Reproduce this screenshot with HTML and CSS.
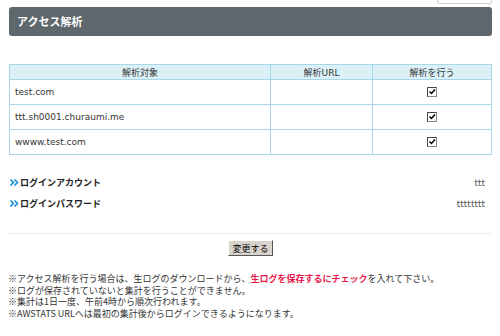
FILE: index.html
```html
<!DOCTYPE html>
<html lang="ja">
<head>
    <meta charset="UTF-8">
    <title>アクセス解析</title>
    <link rel="stylesheet" href="styles.css">
</head>
<body>
    <div class="page">
        <div class="tabline"><div class="tab"></div></div>
        <h1 class="title">アクセス解析</h1>

        <table class="list">
            <tr>
                <th class="c1">解析対象</th>
                <th class="c2">解析URL</th>
                <th class="c3">解析を行う</th>
            </tr>
            <tr>
                <td>test.com</td>
                <td></td>
                <td class="center"><svg class="check" width="10" height="10" viewBox="0 0 10 10"><rect x="0.5" y="0.5" width="9" height="9" fill="#fff" stroke="#888"/><path d="M0.5 9.5V0.5H9.5" fill="none" stroke="#444"/><path d="M2.5 4.5l2 2 3.5-4" fill="none" stroke="#000" stroke-width="1.5"/></svg></td>
            </tr>
            <tr>
                <td>ttt.sh0001.churaumi.me</td>
                <td></td>
                <td class="center"><svg class="check" width="10" height="10" viewBox="0 0 10 10"><rect x="0.5" y="0.5" width="9" height="9" fill="#fff" stroke="#888"/><path d="M0.5 9.5V0.5H9.5" fill="none" stroke="#444"/><path d="M2.5 4.5l2 2 3.5-4" fill="none" stroke="#000" stroke-width="1.5"/></svg></td>
            </tr>
            <tr>
                <td>wwww.test.com</td>
                <td></td>
                <td class="center"><svg class="check" width="10" height="10" viewBox="0 0 10 10"><rect x="0.5" y="0.5" width="9" height="9" fill="#fff" stroke="#888"/><path d="M0.5 9.5V0.5H9.5" fill="none" stroke="#444"/><path d="M2.5 4.5l2 2 3.5-4" fill="none" stroke="#000" stroke-width="1.5"/></svg></td>
            </tr>
        </table>

        <div class="login">
            <div class="row">
                <span class="label"><svg class="arrow" width="9" height="7" viewBox="0 0 9 7"><path d="M0.5 0.5l3 3-3 3M4.5 0.5l3 3-3 3" fill="none" stroke="#1d8fd8" stroke-width="1.6"/></svg>ログインアカウント</span>
                <span class="value">ttt</span>
            </div>
            <div class="row">
                <span class="label"><svg class="arrow" width="9" height="7" viewBox="0 0 9 7"><path d="M0.5 0.5l3 3-3 3M4.5 0.5l3 3-3 3" fill="none" stroke="#1d8fd8" stroke-width="1.6"/></svg>ログインパスワード</span>
                <span class="value">tttttttt</span>
            </div>
        </div>

        <div class="actions">
            <button class="btn">変更する</button>
        </div>

        <div class="notes">
            <p>※アクセス解析を行う場合は、生ログのダウンロードから、<strong class="red">生ログを保存するにチェック</strong>を入れて下さい。</p>
            <p>※ログが保存されていないと集計を行うことができません。</p>
            <p>※集計は1日一度、午前4時から順次行われます。</p>
            <p>※AWSTATS URLへは最初の集計後からログインできるようになります。</p>
        </div>
    </div>
</body>
</html>
```

FILE: styles.css
```css
body {
    margin: 0;
    font-family: "DejaVu Sans", "Noto Sans CJK JP", sans-serif;
    font-size: 9px;
    color: #333;
    background: #fff;
}
.page {
    width: 483px;
    margin-left: 9px;
}
.tabline {
    display: flex;
    justify-content: flex-end;
}
.tab {
    width: 53px;
    height: 3px;
    border: 1px solid #d0d0d0;
    border-top: none;
    border-radius: 0 0 3px 3px;
}
.title {
    margin: 3px 0 0;
    height: 29px;
    line-height: 29px;
    padding-left: 8px;
    background: #5d676c;
    border-radius: 3px;
    color: #fff;
    font-family: "Noto Sans CJK JP", sans-serif;
    font-size: 11px;
    font-weight: bold;
}
.list {
    width: 100%;
    margin-top: 28px;
    border-collapse: collapse;
    border: 1px solid #a9d7ea;
}
.list th,
.list td {
    border: 1px solid #a9d7ea;
    padding: 0 5px;
}
.list th {
    height: 14px;
    background: #dcf0f7;
    font-weight: normal;
    text-align: center;
}
.list td {
    height: 24px;
}
.c1 { width: 250px; }
.c2 { width: 91px; }
.center { text-align: center; }
.check {
    display: inline-block;
    vertical-align: middle;
}
.login {
    margin-top: 17px;
    padding-bottom: 19px;
    border-bottom: 1px dotted #d6dcdc;
}
.row {
    display: flex;
    justify-content: space-between;
    align-items: center;
    height: 21px;
    padding: 0 7px 0 1px;
}
.label {
    display: flex;
    align-items: center;
    font-family: "Noto Sans CJK JP", sans-serif;
    font-weight: bold;
    color: #222;
}
.arrow {
    margin-right: 1px;
}
.value {
    color: #555;
}
.actions {
    text-align: center;
    padding-top: 6px;
}
.btn {
    font-family: "Noto Sans CJK JP", sans-serif;
    font-size: 9px;
    padding: 0 3px;
    height: 16px;
    background: #d8d4cc;
    border: 1px solid;
    border-color: #fff #555 #555 #fff;
    color: #000;
}
.notes {
    margin-top: 17px;
    margin-left: -1px;
    font-family: "Noto Sans CJK JP", sans-serif;
}
.notes p {
    margin: 0;
    line-height: 11.5px;
}
.red {
    color: #e81a4d;
}
```
